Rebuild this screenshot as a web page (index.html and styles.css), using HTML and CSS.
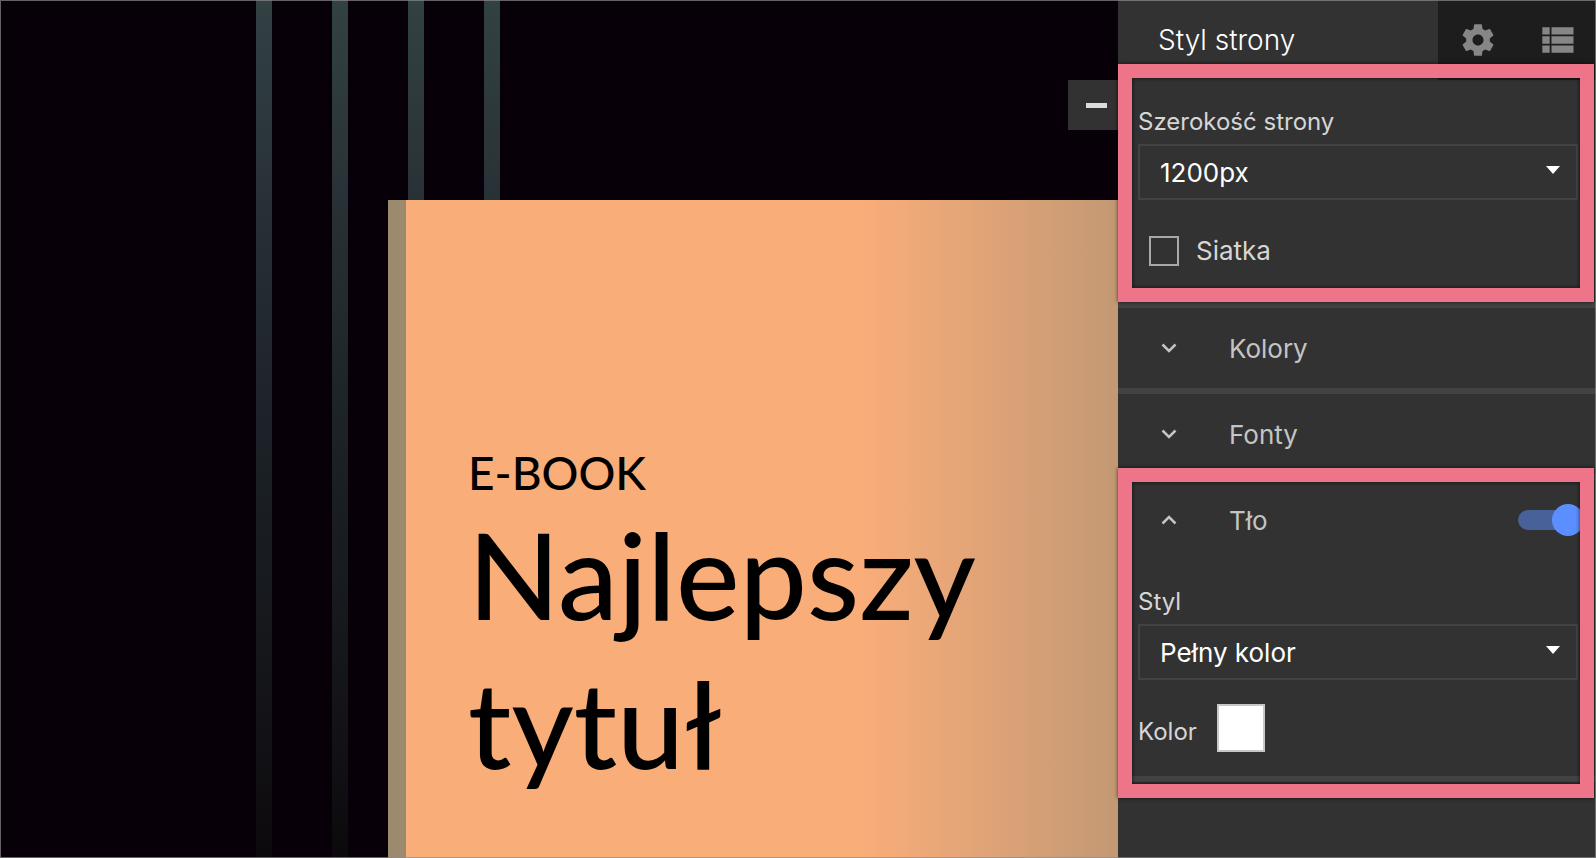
FILE: index.html
```html
<!DOCTYPE html>
<html lang="pl">
<head>
    <meta charset="UTF-8">
    <meta name="viewport" content="width=device-width, initial-scale=1.0">
    <title>Styl strony</title>
    <link rel="stylesheet" href="styles.css">
</head>
<body>
    <div class="editor">
        <main class="canvas">
            <article class="book">
                <p class="book-kicker">E-BOOK</p>
                <h1 class="book-title">Najlepszy tytuł</h1>
            </article>
            <button class="collapse-button" type="button" aria-label="Zwiń panel">
                <span class="collapse-icon"></span>
            </button>
        </main>

        <aside class="sidebar">
            <header class="sidebar-header">
                <h2 class="sidebar-title">Styl strony</h2>
                <button class="sidebar-tab" type="button" aria-label="Ustawienia">
                    <svg width="38" height="38" viewBox="0 0 24 24" fill="currentColor">
                        <path d="M19.43 12.98c.04-.32.07-.64.07-.98s-.03-.66-.07-.98l2.11-1.65c.19-.15.24-.42.12-.64l-2-3.46c-.12-.22-.39-.3-.61-.22l-2.49 1c-.52-.4-1.08-.73-1.69-.98l-.38-2.65C14.46 2.18 14.25 2 14 2h-4c-.25 0-.46.18-.49.42l-.38 2.65c-.61.25-1.17.59-1.69.98l-2.49-1c-.23-.09-.49 0-.61.22l-2 3.46c-.13.22-.07.49.12.64l2.11 1.65c-.04.32-.07.65-.07.98s.03.66.07.98l-2.11 1.65c-.19.15-.24.42-.12.64l2 3.46c.12.22.39.3.61.22l2.49-1c.52.4 1.08.73 1.69.98l.38 2.65c.03.24.24.42.49.42h4c.25 0 .46-.18.49-.42l.38-2.65c.61-.25 1.17-.59 1.69-.98l2.49 1c.23.09.49 0 .61-.22l2-3.46c.12-.22.07-.49-.12-.64l-2.11-1.65zM12 15.5c-1.93 0-3.5-1.57-3.5-3.5s1.57-3.5 3.5-3.5 3.5 1.57 3.5 3.5-1.57 3.5-3.5 3.5z"/>
                    </svg>
                </button>
                <button class="sidebar-tab" type="button" aria-label="Lista sekcji">
                    <svg width="44" height="44" viewBox="0 0 24 24" fill="currentColor">
                        <path d="M4 14h4v-4H4v4zm0 5h4v-4H4v4zM4 9h4V5H4v4zm5 5h12v-4H9v4zm0 5h12v-4H9v4zM9 5v4h12V5H9z"/>
                    </svg>
                </button>
            </header>

            <section class="panel panel-width">
                <div class="field">
                    <label class="field-label" for="pageWidth">Szerokość strony</label>
                    <div class="select-wrapper">
                        <select class="select" id="pageWidth">
                            <option>1200px</option>
                        </select>
                    </div>
                </div>
                <div class="checkbox-row">
                    <input type="checkbox" class="checkbox" id="grid">
                    <label for="grid">Siatka</label>
                </div>
                <div class="highlight"></div>
            </section>

            <section class="panel">
                <button class="panel-toggle" type="button">
                    <svg class="chevron" width="16" height="10" viewBox="0 0 16 10">
                        <path d="M1.5 1.5 8 8l6.500-6.500"/>
                    </svg>
                    Kolory
                </button>
            </section>

            <section class="panel">
                <button class="panel-toggle" type="button">
                    <svg class="chevron" width="16" height="10" viewBox="0 0 16 10">
                        <path d="M1.5 1.5 8 8l6.500-6.500"/>
                    </svg>
                    Fonty
                </button>
            </section>

            <section class="panel">
                <div class="panel-header">
                    <button class="panel-toggle" type="button" aria-expanded="true">
                        <svg class="chevron" width="16" height="10" viewBox="0 0 16 10">
                            <path d="M1.5 8.500 8 2l6.500 6.500"/>
                        </svg>
                        Tło
                    </button>
                    <input type="checkbox" class="switch" aria-label="Tło" checked>
                </div>
                <div class="field">
                    <label class="field-label" for="backgroundStyle">Styl</label>
                    <div class="select-wrapper">
                        <select class="select" id="backgroundStyle">
                            <option>Pełny kolor</option>
                        </select>
                    </div>
                </div>
                <div class="color-row">
                    <label class="color-label" for="backgroundColor">Kolor</label>
                    <input type="color" class="color-swatch" id="backgroundColor" value="#ffffff">
                </div>
                <div class="highlight highlight-overlap"></div>
            </section>
        </aside>
    </div>
</body>
</html>
```

FILE: styles.css
```css
:root {
    --canvas-bg: #070008;
    --panel-bg: #323232;
    --panel-dark: #1d1d1d;
    --line-color: #434343;
    --text-color: #d6d6d6;
    --muted-color: #c4c4c4;
    --highlight-color: #ee7489;
    --accent-color: #5b8fff;
    --stripe: linear-gradient(#324144, #272f35 26%, #1b2126 52%, #141418 82%, #0c090c);
}

* {
    box-sizing: border-box;
}

body {
    margin: 0;
    font-family: Inter, "Liberation Sans", sans-serif;
    font-size: 26px;
    color: var(--text-color);
    background: var(--panel-bg);
}

button,
select {
    font: inherit;
    color: inherit;
    background: none;
    border: none;
    border-radius: 0;
    padding: 0;
    cursor: pointer;
}

input {
    appearance: none;
    margin: 0;
    cursor: pointer;
}

.editor {
    display: flex;
    height: 100vh;
    overflow: hidden;
}

/* thin frame around the whole window */
.editor::after {
    content: "";
    position: fixed;
    inset: 0;
    border: 1px solid rgba(140, 140, 140, 0.7);
    pointer-events: none;
    z-index: 2;
}

/* Canvas */
.canvas {
    position: relative;
    flex: 1;
    min-width: 0;
    display: flex;
    padding: 200px 0 0 388px;
    background-color: var(--canvas-bg);
    background-image: var(--stripe), var(--stripe), var(--stripe), var(--stripe);
    background-size: 16px 100%;
    background-position: 256px 0, 332px 0, 408px 0, 484px 0;
    background-repeat: no-repeat;
}

.book {
    flex: 1;
    min-width: 0;
    padding: 246px 80px 0 62px;
    border-left: 18px solid #9c8a6e;
    background: linear-gradient(to right, #f9ad79 64%, #dfa377 82%, #c29974);
    color: #000;
    font-family: Lato, sans-serif;
    font-weight: 500;
}

.book-kicker {
    margin: 0;
    font-size: 46px;
    line-height: 54px;
}

.book-title {
    margin: 0;
    font-size: 120px;
    font-weight: 500;
    line-height: 149px;
}

.collapse-button {
    position: absolute;
    top: 80px;
    right: 0;
    width: 50px;
    height: 50px;
    padding-left: 6px;
    display: flex;
    align-items: center;
    justify-content: center;
    background: var(--panel-bg);
}

.collapse-icon {
    width: 21px;
    height: 5px;
    background: #dcdcdc;
}

/* Sidebar */
.sidebar {
    flex: 0 0 478px;
    background: var(--panel-bg);
}

.sidebar-header {
    display: flex;
    height: 80px;
    background: var(--panel-dark);
}

.sidebar-title {
    flex: 1;
    margin: 0;
    padding-left: 40px;
    background: var(--panel-bg);
    color: #fff;
    font-size: 28px;
    font-weight: 300;
    line-height: 80px;
}

.sidebar-tab {
    width: 79px;
    display: flex;
    align-items: center;
    justify-content: center;
    color: #868686;
}

.panel {
    position: relative;
    border-bottom: 6px solid var(--line-color);
}

.panel-width {
    padding-bottom: 36px;
}

.panel-header {
    display: flex;
    align-items: center;
    padding-right: 12px;
}

.panel-toggle {
    flex: 1;
    width: 100%;
    height: 80px;
    padding-left: 43px;
    display: flex;
    align-items: center;
    gap: 52px;
    color: var(--muted-color);
}

.chevron {
    fill: none;
    stroke: currentColor;
    stroke-width: 2.5;
}

.field {
    padding: 26px 18px 0 20px;
}

.field-label {
    display: block;
    margin-bottom: 6px;
    font-size: 24px;
    line-height: 32px;
}

.select-wrapper {
    position: relative;
}

.select-wrapper::after {
    content: "";
    position: absolute;
    top: 22px;
    right: 18px;
    width: 14px;
    height: 8px;
    background: #fff;
    clip-path: polygon(0 0, 100% 0, 50% 100%);
    pointer-events: none;
}

.select {
    appearance: none;
    display: block;
    width: 100%;
    height: 56px;
    padding: 0 48px 0 20px;
    border: 2px solid var(--line-color);
    color: #fff;
}

.checkbox-row {
    display: flex;
    align-items: center;
    gap: 17px;
    margin-top: 36px;
    padding-left: 31px;
    line-height: 30px;
}

.checkbox {
    width: 30px;
    height: 30px;
    border: 2px solid #a8a8a8;
}

.switch {
    display: flex;
    align-items: center;
    justify-content: flex-end;
    width: 66px;
    height: 20px;
    background: #486199;
    border-radius: 10px;
}

.switch::before {
    content: "";
    flex: none;
    width: 32px;
    height: 32px;
    border-radius: 50%;
    background: var(--accent-color);
}

.color-row {
    display: flex;
    align-items: flex-end;
    gap: 20px;
    padding: 24px 20px;
}

.color-label {
    font-size: 24px;
    line-height: 40px;
}

.color-swatch {
    width: 48px;
    height: 48px;
    padding: 0;
    border: 2px solid #c8c8c8;
    background: #fff;
}

.color-swatch::-webkit-color-swatch-wrapper {
    padding: 0;
}

.color-swatch::-webkit-color-swatch {
    border: none;
}

/* frame laid over a group of settings */
.highlight {
    position: absolute;
    inset: -16px 2px 0 0;
    border: 14px solid var(--highlight-color);
    box-shadow: 0 0 4px rgba(0, 0, 0, 0.7), inset 0 0 4px rgba(0, 0, 0, 0.7);
    pointer-events: none;
    z-index: 1;
}

.highlight-overlap {
    inset: -12px 2px -22px 0;
}
```
